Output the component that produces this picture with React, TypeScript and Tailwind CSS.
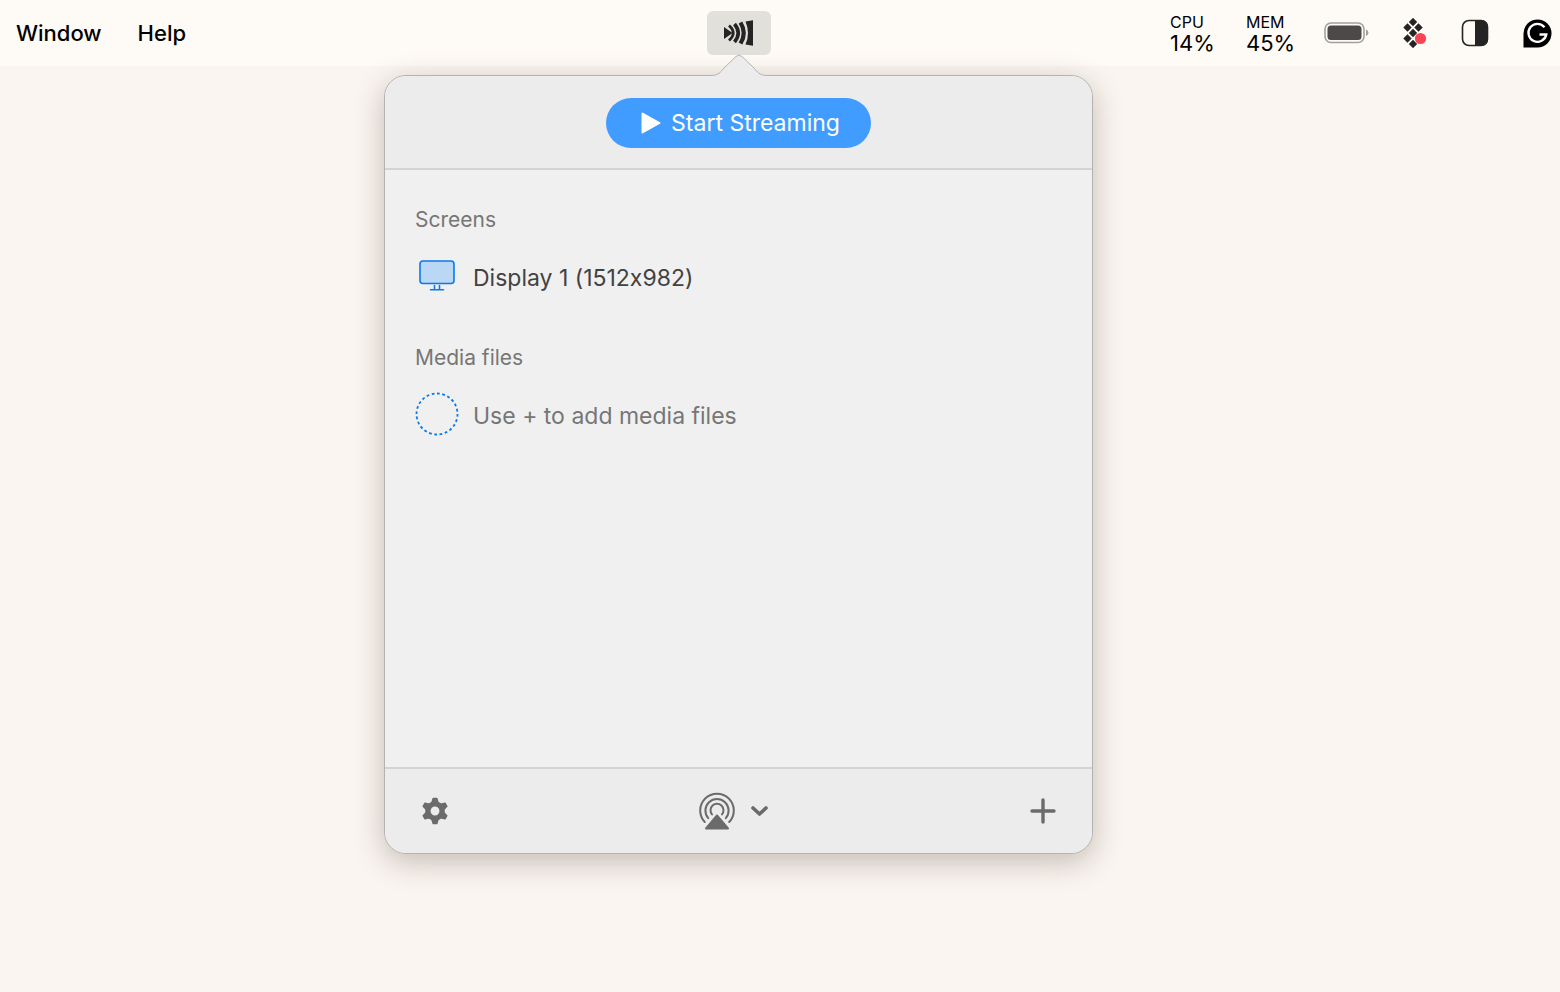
import type { ReactNode } from "react";

function StreamIcon() {
  return (
    <svg width="30" height="26" viewBox="0 0 30 26" fill="none" stroke="#242424">
      <path d="M0 7l8.500 6L0 19z" fill="#242424" stroke="none" />
      <path d="M5 5.500q8.500 7.500 0 15" strokeWidth="2.800" />
      <path d="M10.500 4q7.500 9 0 18" strokeWidth="3.600" />
      <path d="M16.500 2.500q6.500 10.500 0 21" strokeWidth="4.200" />
      <path d="M21.500 1.500L29 .2v25.600l-7.500-1.300q5-11.500 0-23z" fill="#242424" stroke="none" />
    </svg>
  );
}

function BatteryIcon() {
  return (
    <svg width="45" height="22" viewBox="0 0 45 22">
      <rect x="1" y="1" width="39" height="19.500" rx="6" fill="none" stroke="#a3a19e" strokeWidth="1.600" />
      <rect x="3.500" y="3.500" width="34" height="14.500" rx="3.500" fill="#4b4a48" />
      <path d="M42 7.500q2.500 1 2.500 3.300T42 14z" fill="#a3a19e" />
    </svg>
  );
}

const diamonds = [
  [10, 4],
  [4.5, 9.5],
  [15.5, 9.5],
  [10, 15],
  [4.5, 20.5],
  [10, 26],
];

function DiamondsIcon() {
  return (
    <svg width="24" height="30" viewBox="0 0 24 30">
      {diamonds.map(([x, y]) => (
        <path key={`${x}-${y}`} d={`M${x} ${y - 4.2}l4.200 4.200-4.200 4.200-4.200-4.200z`} fill="#242424" />
      ))}
      <circle cx="17.500" cy="20.500" r="5.600" fill="#fb4453" />
    </svg>
  );
}

function SidebarIcon() {
  return (
    <svg width="28" height="28" viewBox="0 0 28 28">
      <rect x="1.500" y="1.500" width="25" height="25" rx="6.500" fill="none" stroke="#242424" strokeWidth="1.600" />
      <path d="M14 1h6.500a6.500 6.500 0 0 1 6.500 6.500v13a6.500 6.500 0 0 1-6.500 6.500H14z" fill="#242424" />
    </svg>
  );
}

function GrammarIcon() {
  return (
    <svg width="29" height="29" viewBox="0 0 29 29" fill="none">
      <path d="M14.500.5A14 14 0 1 1 14.500 28.500H.5v-14A14 14 0 0 1 14.500.5z" fill="#000" />
      <path d="M21.500 8.200A9 9 0 1 0 23.300 15.500H16.500M23.300 15.500l-1.500 4" stroke="#fff" strokeWidth="2.300" />
    </svg>
  );
}

function DisplayIcon() {
  return (
    <svg width="36" height="32" viewBox="0 0 36 32" fill="none" stroke="#0a7aea" strokeWidth="1.600">
      <rect x="1" y="1" width="34" height="22.500" rx="3" fill="#bad8f5" />
      <path d="M15.500 25.500v4M20.500 25.500v4M11.500 29.700h13" strokeLinecap="round" />
    </svg>
  );
}

function DashedCircle() {
  return (
    <svg width="44" height="44" viewBox="0 0 44 44" fill="none">
      <circle cx="22" cy="22" r="20.500" stroke="#0a7aea" strokeWidth="1.800" pathLength="120" strokeDasharray="2.600 2.400" />
    </svg>
  );
}

function GearIcon() {
  return (
    <svg width="28" height="28" viewBox="0 0 28 28" fill="#6b6b6b" stroke="#6b6b6b" strokeLinejoin="round">
      <path
        fillRule="evenodd"
        strokeWidth="1.500"
        d="M12.200 1.500h3.600l1.200 4 3 1.700 4-1 1.800 3.100L23 12.300v3.400l2.800 3-1.800 3.100-4-1-3 1.700-1.200 4h-3.600l-1.200-4-3-1.700-4 1-1.800-3.100 2.800-3v-3.400l-2.800-3L4 6.200l4 1 3-1.700zM14 8.800a5.200 5.200 0 1 0 0 10.400 5.200 5.200 0 0 0 0-10.400z"
      />
    </svg>
  );
}

function AirPlayIcon() {
  return (
    <svg width="36" height="38" viewBox="0 0 36 38" fill="none" stroke="#6b6b6b" strokeWidth="2" strokeLinecap="round">
      <path d="M5.800 30A16.800 16.800 0 1 1 30.200 30" />
      <path d="M9.200 26.200A11.600 11.600 0 1 1 26.800 26.200" />
      <path d="M13 22.400A6.500 6.500 0 1 1 23 22.400" />
      <path d="M18 23.500L29 36.500H7z" fill="#6b6b6b" strokeLinejoin="round" />
    </svg>
  );
}

function Stat({ label, value }: { label: string; value: string }) {
  return (
    <dl className="flex w-[46px] flex-col whitespace-nowrap">
      <dt className="text-base leading-5">{label}</dt>
      <dd className="text-[22px] leading-[22px]">{value}</dd>
    </dl>
  );
}

function MenuBar() {
  return (
    <header className="grid h-[66px] grid-cols-[1fr_64px_1fr_83px] items-center bg-[#fefaf5] text-black">
      <nav className="flex gap-9 pl-4 text-[22px] leading-7 font-medium">
        <button type="button">Window</button>
        <button type="button">Help</button>
      </nav>
      <button
        type="button"
        aria-label="Streaming"
        className="flex h-11 items-center justify-center rounded-md bg-[#e2e0db]"
      >
        <StreamIcon />
      </button>
      <div className="col-span-2 flex items-center justify-end pr-2">
        <div className="flex items-center gap-[30px] pr-8">
          <Stat label="CPU" value="14%" />
          <Stat label="MEM" value="45%" />
        </div>
        <div className="flex items-center gap-[34px]">
          <BatteryIcon />
          <DiamondsIcon />
          <SidebarIcon />
          <GrammarIcon />
        </div>
      </div>
    </header>
  );
}

function Section({ title, children }: { title: string; children: ReactNode }) {
  return (
    <section>
      <h2 className="text-[21px] leading-7 text-[#767676]">{title}</h2>
      <div className="mt-5 flex h-11 items-center gap-[14px] text-[23px]">{children}</div>
    </section>
  );
}

function Popover() {
  return (
    <div className="relative flex h-[779px] w-[709px] flex-col rounded-[22px] border border-[#b5b3b1] bg-[#f0f0f0] shadow-[0_8px_30px_rgba(60,40,20,0.28)]">
      <svg className="absolute -top-[22px] left-1/2 -translate-x-1/2" width="56" height="23" viewBox="0 0 56 23">
        <path
          d="M0 21.500C7 21.500 10 18 13 14L25 2.500Q28-.5 31 2.500L43 14C46 18 49 21.500 56 21.500V23H0z"
          fill="#ececec"
        />
        <path
          d="M0 21.500C7 21.500 10 18 13 14L25 2.500Q28-.5 31 2.500L43 14C46 18 49 21.500 56 21.500"
          fill="none"
          stroke="#b5b3b1"
        />
      </svg>

      <div className="flex h-[94px] items-center justify-center rounded-t-[21px] border-b-2 border-[#d3d3d3] bg-[#ececec] pt-0.5">
        <button
          type="button"
          className="flex h-[50px] w-[265px] items-center justify-center gap-[10px] rounded-full bg-[#419cff] pl-1 text-[23px] text-white"
        >
          <svg width="20" height="22" viewBox="0 0 20 22" fill="#fff" stroke="#fff" strokeWidth="2" strokeLinejoin="round">
            <path d="M1.500 1.500L18.500 11 1.500 20.500z" />
          </svg>
          Start Streaming
        </button>
      </div>

      <div className="flex flex-1 flex-col gap-[46px] px-[30px] pt-9">
        <Section title="Screens">
          <span className="flex w-11 justify-center">
            <DisplayIcon />
          </span>
          <span className="pt-1 text-[#424242]">Display 1 (1512x982)</span>
        </Section>
        <Section title="Media files">
          <DashedCircle />
          <span className="pt-1 text-[#767676]">Use + to add media files</span>
        </Section>
      </div>

      <footer className="grid h-[86px] grid-cols-3 items-center rounded-b-[21px] border-t-2 border-[#d3d3d3] bg-[#ececec] px-9">
        <button type="button" aria-label="Settings" className="justify-self-start">
          <GearIcon />
        </button>
        <button type="button" aria-label="AirPlay devices" className="flex items-center gap-4 justify-self-center pr-2.5">
          <AirPlayIcon />
          <svg width="17" height="11" viewBox="0 0 17 11" fill="none" stroke="#6b6b6b" strokeWidth="3.600">
            <path d="M2 2l6.500 6L15 2" strokeLinecap="round" strokeLinejoin="round" />
          </svg>
        </button>
        <button type="button" aria-label="Add media" className="justify-self-end">
          <svg width="26" height="26" viewBox="0 0 26 26" stroke="#6b6b6b" strokeWidth="3.400" strokeLinecap="round">
            <path d="M13 2v22M2 13h22" />
          </svg>
        </button>
      </footer>
    </div>
  );
}

export default function App() {
  return (
    <div className="min-h-screen bg-[#faf5f1] font-['Inter',sans-serif] [font-feature-settings:'calt'_0]">
      <MenuBar />
      <main className="flex justify-center pt-[9px] pr-[83px]">
        <Popover />
      </main>
    </div>
  );
}
